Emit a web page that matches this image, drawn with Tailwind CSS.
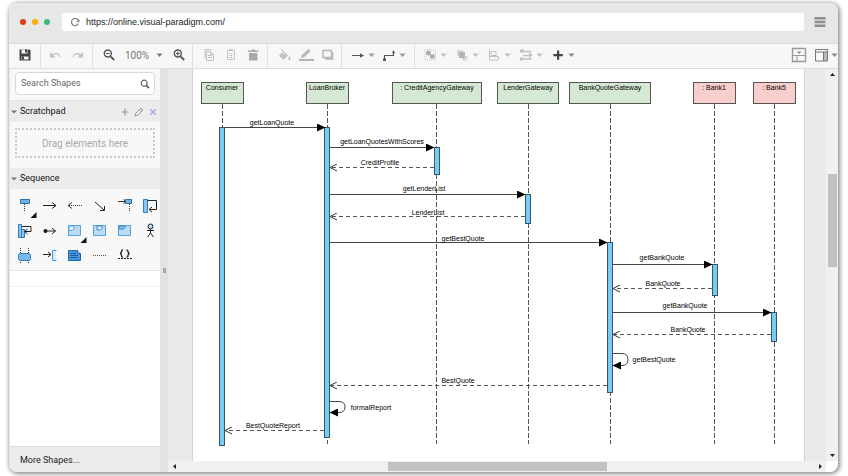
<!DOCTYPE html>
<html lang="en">
  <head>
    <meta charset="UTF-8" />
    <meta name="viewport" content="width=device-width, initial-scale=1.0" />
    <title>Sequence Diagram</title>
    <script src="https://cdn.jsdelivr.net/npm/@tailwindcss/browser@4"></script>
  </head>
  <body class="bg-white h-screen pt-[3px] pr-[10px] pb-1 pl-[9px] overflow-hidden font-['Liberation_Sans',Arial,sans-serif] text-[9px] text-[#333]">
    <!-- Shared icon shapes -->
    <svg class="hidden">
      <symbol id="caret" viewBox="0 0 7 16"><path d="M.5 6.500h6L3.500 10z" fill="currentColor" /></symbol>
      <symbol id="fold" viewBox="0 0 8 8"><path d="M1 2.500h6L4 5.500z" fill="#777" /></symbol>
    </svg>

    <div class="flex flex-col h-full rounded-lg overflow-hidden bg-white shadow-[1px_1px_4px_1px_rgba(0,0,0,0.45)]">
      <!-- Browser bar -->
      <header class="flex items-center h-10 shrink-0 bg-[#e7e7e7] pl-[11px] pr-3 pb-[2px]">
        <div class="flex gap-[6px] mr-3">
          <span class="size-[6px] rounded-full bg-[#e0380f]"></span>
          <span class="size-[6px] rounded-full bg-[#fdac04]"></span>
          <span class="size-[6px] rounded-full bg-[#3bb77e]"></span>
        </div>
        <div class="flex flex-1 items-center h-[18px] bg-white rounded-xs pl-2">
          <button class="mr-[6px]" aria-label="Reload">
            <svg class="size-[10px]" viewBox="0 0 10 10" fill="none" stroke="#888" stroke-width="1.3"><path d="M8.500 4A3.600 3.600 0 1 0 8.300 6.600" /><path d="M9.500 2v3H6.500z" fill="#888" stroke="none" /></svg>
          </button>
          <input type="text" aria-label="Address" value="https://online.visual-paradigm.com/" class="flex-1 outline-none pt-[2px] text-[#222]" />
        </div>
        <button class="ml-[10px]" aria-label="Menu">
          <svg class="w-3 h-[10px]" viewBox="0 0 12 10" fill="#8e8e8e"><path d="M.5 0h11v2.500H.5zM.5 3.700h11v2.500H.5zM.5 7.400h11v2.500H.5z" /></svg>
        </button>
      </header>

      <!-- Toolbar -->
      <div class="flex h-[26px] shrink-0 bg-[#f7f7f7] border-y border-[#dcdcdc] text-[#c2c2c2] *:pb-[2px]">
        <div class="flex items-center justify-center w-8 border-r border-[#e0e0e0]">
          <button aria-label="Save">
            <svg class="size-4" viewBox="0 0 16 16"><path d="M2.500 2.500h10l1 1v10h-11z" fill="#444" /><path d="M4.500 2.500h6v4h-6zM4.500 9.500h7v3h-7z" fill="#f7f7f7" /><path d="M8 2.500h2v3H8zM5 9.500h2v3H5z" fill="#444" /></svg>
          </button>
        </div>
        <div class="flex items-center gap-[7px] w-[52px] pl-[6px] border-r border-[#e0e0e0]">
          <button aria-label="Undo">
            <svg class="size-4" viewBox="0 0 16 16"><path d="M3 5v5.500h5.500L6.500 8.500Q10.500 5.500 12.500 10l1-.3Q11 4 5.200 7.300z" fill="currentColor" /></svg>
          </button>
          <button aria-label="Redo">
            <svg class="size-4" viewBox="0 0 16 16"><path d="M13 5v5.500H7.500L9.500 8.500Q5.500 5.500 3.500 10l-1-.3Q5 4 10.800 7.300z" fill="currentColor" /></svg>
          </button>
        </div>
        <div class="flex items-center w-[100px] pl-2 border-r border-[#e0e0e0] text-[#777]">
          <button aria-label="Zoom out">
            <svg class="size-4" viewBox="0 0 16 16" fill="none" stroke="#555" stroke-width="1.400"><circle cx="6.800" cy="6.500" r="3.500" /><path d="M9.500 9.300l3.700 3.700" stroke-width="1.800" /><path d="M5 6.500h3.600" stroke-width="1" /></svg>
          </button>
          <button class="flex items-center justify-between w-[38px] mx-2 font-[Roboto,sans-serif] text-[10px]">100%<svg class="w-[7px] h-4"><use href="#caret" /></svg></button>
          <button aria-label="Zoom in">
            <svg class="size-4" viewBox="0 0 16 16" fill="none" stroke="#555" stroke-width="1.400"><circle cx="6.800" cy="6.500" r="3.500" /><path d="M9.500 9.300l3.700 3.700" stroke-width="1.800" /><path d="M5 6.500h3.600M6.800 4.700v3.600" stroke-width="1.200" /></svg>
          </button>
        </div>
        <div class="flex items-center gap-[6px] w-[75px] pl-2 border-r border-[#e0e0e0]">
          <button aria-label="Copy">
            <svg class="size-4" viewBox="0 0 16 16" fill="none" stroke="currentColor"><path d="M4 11.500V2.500h6.500" /><path d="M5.500 4.500h4l3 3v6h-7zM7 8.500h4M7 10.500h4M9.500 4.500v3h3" /></svg>
          </button>
          <button aria-label="Paste">
            <svg class="size-4" viewBox="0 0 16 16" fill="none" stroke="currentColor"><path d="M4.500 3.500h7v9h-7zM6.500 6.500h3M6.500 8.500h3M6.500 10.500h3" /><path d="M6.500 3h3" stroke-width="2" /></svg>
          </button>
          <button aria-label="Delete">
            <svg class="size-4" viewBox="0 0 16 16" fill="#aaa"><path d="M3 3.500h3l1-1h2.500l1 1h3V5H3zM4 6h8.500v7.500H4z" /></svg>
          </button>
        </div>
        <div class="flex items-center gap-[6px] w-[74px] pl-2 border-r border-[#e0e0e0]">
          <button aria-label="Fill colour">
            <svg class="size-4" viewBox="0 0 16 16"><path d="M3 8.500L7.500 4l4.500 4.500L7.500 13z" fill="currentColor" /><path d="M5.500 2l2.500 3M5 7.500L7.500 5 10 7.500z" stroke="currentColor" fill="#f7f7f7" /><path d="M13.500 9q2.500 4 0 4t0-4" fill="currentColor" /></svg>
          </button>
          <button aria-label="Line colour">
            <svg class="size-4" viewBox="0 0 16 16"><path d="M3 11l1-3L10.500 2l2 2L6 10.300z" fill="#b5b5b5" /><path d="M1 12h15v2H1z" fill="#b5b5b5" /></svg>
          </button>
          <button aria-label="Shadow">
            <svg class="size-4" viewBox="0 0 16 16"><path d="M5 5h8.500v8H5z" fill="currentColor" /><path d="M3 3.500h8.500v7H3z" fill="#f7f7f7" stroke="#b5b5b5" stroke-width="1.400" /></svg>
          </button>
        </div>
        <div class="flex items-center gap-[6px] w-[73px] pl-2 border-r border-[#e0e0e0] text-[#999]">
          <button class="flex gap-[2px]" aria-label="Connection">
            <svg class="size-4" viewBox="0 0 16 16"><path d="M2 8.500h9" stroke="#555" stroke-width="1.200" /><path d="M10 6.300l4 2.200-4 2.200z" fill="#555" /></svg>
            <svg class="w-[7px] h-4"><use href="#caret" /></svg>
          </button>
          <button class="flex gap-[2px]" aria-label="Waypoints">
            <svg class="size-4" viewBox="0 0 16 16" fill="none" stroke="#555" stroke-width="1.200"><path d="M3.500 12V8.500H12.500V4" /><path d="M2 11.500h3v2.500H2zM11 6l1.500-3L14 6z" fill="#555" stroke="none" /></svg>
            <svg class="w-[7px] h-4"><use href="#caret" /></svg>
          </button>
        </div>
        <div class="flex items-center gap-[7px] pl-[7px]">
          <button class="flex gap-[2px]" aria-label="Group">
            <svg class="size-4" viewBox="0 0 16 16"><path d="M3 3h10.500v10H3z" fill="none" stroke="currentColor" stroke-dasharray="1 1" /><circle cx="6.500" cy="6" r="2.500" fill="#aaa" /><path d="M8 7.500h4.500v4H8z" fill="#aaa" /></svg>
            <svg class="w-[7px] h-4"><use href="#caret" /></svg>
          </button>
          <button class="flex gap-[2px]" aria-label="Arrange">
            <svg class="size-4" viewBox="0 0 16 16"><path d="M3 3h6v6H3zM8 9h5.500v4.500H8z" fill="#d8d8d8" /><path d="M5 5h6v6H5z" fill="#b5b5b5" /></svg>
            <svg class="w-[7px] h-4"><use href="#caret" /></svg>
          </button>
          <button class="flex gap-[2px]" aria-label="Align">
            <svg class="size-4" viewBox="0 0 16 16" fill="none" stroke="currentColor"><path d="M3.500 2.500v11M5 4.500h5v4H5zM3.500 9.500h9v3.500h-9" /></svg>
            <svg class="w-[7px] h-4"><use href="#caret" /></svg>
          </button>
          <button class="flex gap-[2px]" aria-label="Layout">
            <svg class="size-4" viewBox="0 0 16 16" fill="none" stroke="currentColor" stroke-width="1.300"><path d="M4 4.500h9.500M5 8.500h7M4 12h9.500M12 4.500v7" /><path d="M2 2.500h4v3H2zM2 10.500h3v3H2zM11 7h3v2h-3z" fill="currentColor" stroke="none" /></svg>
            <svg class="w-[7px] h-4"><use href="#caret" /></svg>
          </button>
          <button class="flex gap-[2px] text-[#888]" aria-label="Insert">
            <svg class="size-4" viewBox="0 0 16 16"><path d="M7 3.500h2.200V7h3.600v2.200H9.200v3.600H7V9.200H3.400V7H7z" fill="#444" /></svg>
            <svg class="w-[7px] h-4"><use href="#caret" /></svg>
          </button>
        </div>
        <div class="flex items-center ml-auto text-[#888]">
          <button class="mr-[6px]" aria-label="Fullscreen">
            <svg class="size-4" viewBox="0 0 16 16"><path d="M1.500 1.500h13v13h-13z" fill="#f7f7f7" stroke="#999" stroke-width="1.400" /><path d="M2 8.500h12.500M6 8.500v6" stroke="#999" /><path d="M6 4.500h4.500L8.200 7z" fill="#888" /></svg>
          </button>
          <button class="flex gap-[2px]" aria-label="Format panel">
            <svg class="size-4" viewBox="0 0 16 16" fill="none" stroke="#777"><path d="M10.500 5h3.500v9h-3.500z" fill="#bbb" stroke="none" /><path d="M2.500 2.500h12v11.500h-12zM2.500 5h12M10.500 5v9" /></svg>
            <svg class="w-[7px] h-4"><use href="#caret" /></svg>
          </button>
        </div>
      </div>

      <!-- Workspace -->
      <div class="flex flex-1 min-h-0">
        <!-- Shape library -->
        <aside class="flex flex-col w-[151px] shrink-0 border-l border-[#e4e4e4] font-[Roboto,sans-serif]">
          <div class="h-[31px] shrink-0 bg-[#f8f8f8] pt-[3px] px-[5px]">
            <div class="flex items-center h-[23px] bg-white border border-[#d8d8d8] rounded pl-[5px] pr-1">
              <input type="text" aria-label="Search Shapes" placeholder="Search Shapes" class="flex-1 min-w-0 outline-none placeholder:text-[#666]" />
              <svg class="size-[10px]" viewBox="0 0 10 10" fill="none" stroke="#666" stroke-width="1.200"><circle cx="4.200" cy="4.200" r="3" /><path d="M6.300 6.300L9 9" stroke-width="1.800" /></svg>
            </div>
          </div>

          <div class="flex items-center h-[22px] shrink-0 bg-[#ececec] border-t border-[#e4e4e4] text-[#112]">
            <button class="flex items-center gap-[2px]"><svg class="size-2"><use href="#fold" /></svg>Scratchpad</button>
            <div class="flex items-center gap-1 ml-auto pr-[2px]">
              <button aria-label="Add"><svg class="size-[10px]" viewBox="0 0 10 10" stroke="#999" stroke-width="1.200"><path d="M1.500 5h7M5 1.500v7" /></svg></button>
              <button aria-label="Edit"><svg class="size-[10px]" viewBox="0 0 10 10" fill="none" stroke="#999"><path d="M1 9l.8-2.800L7 1l2 2-5.200 5.200zM5.700 2.300l2 2" /></svg></button>
              <button aria-label="Close"><svg class="size-[10px]" viewBox="0 0 10 10" stroke="#9fb3d6" stroke-width="1.500"><path d="M2.200 2.200l5.600 5.600M7.800 2.200L2.200 7.800" /></svg></button>
            </div>
          </div>
          <div class="h-[46px] shrink-0 bg-[#f8f8f8] pt-[6px] px-[5px]">
            <div class="flex items-center justify-center h-[30px] border-2 border-dotted border-[#c9c9c9] rounded-xs text-[10px] text-[#a9a9a9]">Drag elements here</div>
          </div>

          <div class="flex items-center h-[21px] shrink-0 bg-[#ececec] text-[#111]">
            <button class="flex items-center gap-[2px]"><svg class="size-2"><use href="#fold" /></svg>Sequence</button>
          </div>
          <div class="grid grid-cols-[repeat(6,25px)] h-[82px] shrink-0 content-start bg-[#f8f8f8] border-b border-[#e4e4e4] pt-1 pl-[2px]">
            <svg class="size-[25px]" viewBox="0 0 25 25"><path d="M8.500 6.500h9v4h-9z" fill="#6fb2e6" stroke="#2d6fa8" /><path d="M12.500 11v8" stroke="#333" stroke-dasharray="1 1" /><path d="M24.500 19v6h-6z" fill="#111" /></svg>
            <svg class="size-[25px]" viewBox="0 0 25 25" fill="none" stroke="#222"><path d="M6 12.500h12.500M15 9.500l4 3-4 3" /></svg>
            <svg class="size-[25px]" viewBox="0 0 25 25" fill="none" stroke="#333"><path d="M7 12.500h13" stroke-dasharray="1 1" /><path d="M10 9.500l-4 3 4 3" /></svg>
            <svg class="size-[25px]" viewBox="0 0 25 25" fill="none" stroke="#222"><path d="M8 9l9 8M17.500 13v4.500H13" /></svg>
            <svg class="size-[25px]" viewBox="0 0 25 25"><path d="M6 8.500h8M11.500 6.500l2.500 2-2.500 2" fill="none" stroke="#333" /><path d="M13.500 6.500h6v4h-6z" fill="#6fb2e6" stroke="#2d6fa8" /><path d="M17.500 11v8" stroke="#333" stroke-dasharray="1 1" /></svg>
            <svg class="size-[25px]" viewBox="0 0 25 25"><path d="M6.500 6.500h4v13h-4z" fill="#8cc4ef" stroke="#2d7fc0" /><path d="M10.500 7.500h9v9h-7M15 14l-3 2.500 3 2.500" fill="none" stroke="#222" /></svg>

            <svg class="size-[25px]" viewBox="0 0 25 25"><path d="M6.500 6.500h3v13h-3zM9.500 11.500h3v8h-3z" fill="#8cc4ef" stroke="#2d7fc0" /><path d="M10 8.500h9v5h-6M15.500 11l-3 2.500 3 2.500" fill="none" stroke="#222" /></svg>
            <svg class="size-[25px]" viewBox="0 0 25 25" fill="none" stroke="#222"><circle cx="8.500" cy="13" r="2" fill="#111" stroke="none" /><path d="M8 13h10.500M15 10l3.500 3-3.500 3" /></svg>
            <svg class="size-[25px]" viewBox="0 0 25 25"><path d="M6.500 7.500h12v10h-12z" fill="#b9dcf7" stroke="#5aa0dc" /><path d="M7 8h5v3l-1.500 1.500H7z" fill="#e6f3fd" stroke="#5aa0dc" /><path d="M24.500 19v6h-6z" fill="#111" /></svg>
            <svg class="size-[25px]" viewBox="0 0 25 25"><path d="M6.500 7.500h12v10h-12z" fill="#b9dcf7" stroke="#5aa0dc" /><path d="M10 8h5v2.500L13.500 12H10z" fill="#e6f3fd" stroke="#3f84c4" /></svg>
            <svg class="size-[25px]" viewBox="0 0 25 25"><path d="M6.500 7.500h12v10h-12z" fill="#b9dcf7" stroke="#5aa0dc" /><path d="M7 8h6v1.500L11.500 11H7z" fill="#8cc4ef" stroke="#3f84c4" /></svg>
            <svg class="size-[25px]" viewBox="0 0 25 25" fill="none" stroke="#222"><circle cx="13.500" cy="8.500" r="2.500" fill="#b9dcf7" /><path d="M13.500 11v4M10 12.500h7M13.500 15l-3 4M13.500 15l3 4" /></svg>

            <svg class="size-[25px]" viewBox="0 0 25 25"><path d="M8.500 5v15M16.500 5v15" stroke="#333" stroke-dasharray="1 1" /><rect x="6.500" y="10.500" width="12" height="7" rx="2" fill="#7ab8ea" stroke="#2d7fc0" /></svg>
            <svg class="size-[25px]" viewBox="0 0 25 25"><path d="M6 11.500h8M11 9l3 2.500-3 2.500" fill="none" stroke="#222" /><path d="M16 8h3v9h-3z" fill="#d3eafb" /><path d="M19.500 7.500h-4v10h4" fill="none" stroke="#4a98dc" /></svg>
            <svg class="size-[25px]" viewBox="0 0 25 25"><path d="M6.500 7.500h9l3 3v7h-12z" fill="#4a98dc" stroke="#1f68ac" /><path d="M8 10.500h6M8 12.500h8M8 14.500h8" stroke="#1f5f9f" /><path d="M15.500 7.500v3h3" fill="#cfe6fa" stroke="#1f68ac" /></svg>
            <svg class="size-[25px]" viewBox="0 0 25 25"><path d="M6 12.500h14" stroke="#555" stroke-dasharray="1 1" /></svg>
            <svg class="size-[25px]" viewBox="0 0 25 25" fill="none" stroke="#222"><path d="M11 7q-1.500 0-1.500 1.500T8 10.500q1.500 0 1.500 2T11 14M14.500 7q1.500 0 1.500 1.500t1.500 2q-1.500 0-1.500 2T14.500 14" stroke-width="1.300" /><path d="M6 15.500h14" stroke-dasharray="2 1" /></svg>
          </div>
          <div class="h-4 shrink-0 border-b border-[#f0f0f0]"></div>
          <div class="flex items-center h-[26px] shrink-0 mt-auto bg-[#ececec] border-t border-[#dcdcdc] pl-[10px] pt-[2px]">
            <button class="text-[#222]">More Shapes...</button>
          </div>
        </aside>

        <!-- Splitter -->
        <div class="flex items-center justify-center w-2 shrink-0 bg-[#e2e2e2]">
          <span class="w-[3px] h-[5px] bg-[#a5a5a5]"></span>
        </div>

        <!-- Canvas with scrollbars -->
        <div class="flex flex-col flex-1 min-w-0">
          <div class="flex flex-1 min-h-0">
            <main class="flex-1 min-w-0 overflow-hidden bg-[#eaeaea] pl-6">
              <div class="w-[613px] h-full bg-white border-x border-[#d4d4d4]">
                <svg class="block w-[611px] h-[391px] text-[7px]" viewBox="193 69 611 391">
                  <defs>
                    <marker id="call" markerUnits="userSpaceOnUse" markerWidth="9" markerHeight="8" refX="8" refY="4" orient="auto"><path d="M0 0l8.500 4L0 8z" fill="#000" /></marker>
                    <marker id="reply" markerUnits="userSpaceOnUse" markerWidth="9" markerHeight="8" refX="8" refY="4" orient="auto"><path d="M1 .5L8 4 1 7.500" fill="none" stroke="#333" /></marker>
                  </defs>

                  <!-- Lifelines -->
                  <g stroke="#555" stroke-dasharray="5 2">
                    <path d="M222.500 104v23M327.500 104v340M436.500 104v340M528.500 104v340M610.500 104v340M714.500 104v340M774.500 104v340" />
                  </g>

                  <!-- Participants -->
                  <g fill="#d5e8d4" stroke="#555">
                    <rect x="201.500" y="82.500" width="42" height="21" />
                    <rect x="306.500" y="82.500" width="42" height="21" />
                    <rect x="392.500" y="82.500" width="89" height="21" />
                    <rect x="497.500" y="82.500" width="61" height="21" />
                    <rect x="569.500" y="82.500" width="81" height="21" />
                    <rect x="693.500" y="82.500" width="42" height="21" fill="#f8cecc" />
                    <rect x="753.500" y="82.500" width="42" height="21" fill="#f8cecc" />
                  </g>
                  <g text-anchor="middle" fill="#000">
                    <text x="222" y="90">Consumer</text>
                    <text x="327" y="90">LoanBroker</text>
                    <text x="437" y="90">: CreditAgencyGateway</text>
                    <text x="528" y="90">LenderGateway</text>
                    <text x="610" y="90">BankQuoteGateway</text>
                    <text x="714" y="90">: Bank1</text>
                    <text x="774" y="90">: Bank5</text>
                  </g>

                  <!-- Activations -->
                  <g fill="#74cdf5" stroke="#3a5563">
                    <rect x="219.500" y="127.500" width="5" height="318" />
                    <rect x="324.500" y="127.500" width="5" height="310" />
                    <rect x="434.500" y="147.500" width="5" height="27" />
                    <rect x="525.500" y="194.500" width="5" height="29" />
                    <rect x="607.500" y="242.500" width="5" height="150" />
                    <rect x="712.500" y="264.500" width="5" height="31" />
                    <rect x="771.500" y="312.500" width="5" height="29" />
                  </g>

                  <!-- Calls -->
                  <g stroke="#444" fill="none">
                    <path marker-end="url(#call)" d="M225 127.500H325" />
                    <path marker-end="url(#call)" d="M330 147.500H434" />
                    <path marker-end="url(#call)" d="M330 194.500H525" />
                    <path marker-end="url(#call)" d="M330 242.500H607" />
                    <path marker-end="url(#call)" d="M613 264.500H712" />
                    <path marker-end="url(#call)" d="M613 312.500H771" />
                    <path marker-end="url(#call)" d="M613 353.500h9q6 0 6 6t-6 6h-9" />
                    <path marker-end="url(#call)" d="M330 401.500h9q6 0 6 5.500t-6 5.500h-9" />
                  </g>

                  <!-- Replies -->
                  <g stroke="#555" stroke-dasharray="4 3" fill="none">
                    <path marker-end="url(#reply)" d="M434 167.500H330" />
                    <path marker-end="url(#reply)" d="M525 216.500H330" />
                    <path marker-end="url(#reply)" d="M712 288.500H613" />
                    <path marker-end="url(#reply)" d="M771 334.500H613" />
                    <path marker-end="url(#reply)" d="M607 385.500H330" />
                    <path marker-end="url(#reply)" d="M324 430.500H225" />
                  </g>

                  <!-- Message labels -->
                  <g text-anchor="middle" fill="#000">
                    <text x="272" y="125">getLoanQuote</text>
                    <text x="382" y="144">getLoanQuotesWithScores</text>
                    <text x="380" y="165">CreditProfile</text>
                    <text x="424" y="191">getLenderList</text>
                    <text x="428" y="215">LenderList</text>
                    <text x="463" y="241">getBestQuote</text>
                    <text x="662" y="260">getBankQuote</text>
                    <text x="663" y="286">BankQuote</text>
                    <text x="685" y="308">getBankQuote</text>
                    <text x="688" y="332">BankQuote</text>
                    <text x="654" y="362">getBestQuote</text>
                    <text x="458" y="383">BestQuote</text>
                    <text x="371" y="410">formalReport</text>
                    <text x="273" y="428">BestQuoteReport</text>
                  </g>
                </svg>
              </div>
            </main>
            <div class="flex flex-col items-center justify-between w-3 shrink-0 bg-[#f0f0f0] py-1">
              <svg class="w-[5px] h-[3px]" viewBox="0 0 5 3"><path d="M0 3h5L2.500 0z" fill="#222" /></svg>
              <span class="w-[9px] h-[93px] mb-[90px] bg-[#c1c1c1]"></span>
              <svg class="w-[5px] h-[3px]" viewBox="0 0 5 3"><path d="M0 0h5L2.500 3z" fill="#222" /></svg>
            </div>
          </div>
          <div class="flex items-center justify-between h-[11px] shrink-0 bg-[#f0f0f0] pl-[5px] mr-3 pr-1">
            <svg class="w-[3px] h-[5px]" viewBox="0 0 3 5"><path d="M3 0v5L0 2.500z" fill="#222" /></svg>
            <span class="w-[219px] h-[9px] bg-[#c1c1c1]"></span>
            <svg class="w-[3px] h-[5px]" viewBox="0 0 3 5"><path d="M0 0v5l3-2.500z" fill="#222" /></svg>
          </div>
        </div>
      </div>
    </div>
  </body>
</html>
